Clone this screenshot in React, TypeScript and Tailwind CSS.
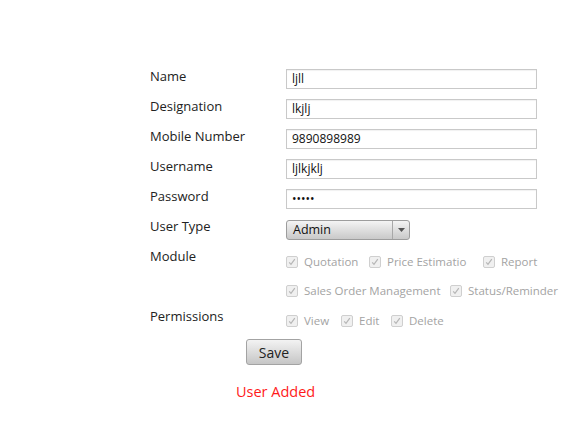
import type { ReactNode } from 'react'

const font = { fontFamily: '"Open Sans", "Segoe UI", "Liberation Sans", sans-serif' }

function Check({ label }: { label: string }) {
  return (
    <span className="flex items-center gap-[6px] text-[11.5px] text-[#a3a3a3]">
      <span className="flex h-[12px] w-[12px] items-center justify-center rounded-[2px] border border-[#cfcfcf] bg-[#f0f0f0]">
        <svg width="8" height="8" viewBox="0 0 8 8" fill="none">
          <path d="M1.2 4.3 L3 6.3 L6.8 1.2" stroke="#b5b5b5" strokeWidth="1.2" />
        </svg>
      </span>
      {label}
    </span>
  )
}

function Row({ label, children }: { label: string; children: ReactNode }) {
  return (
    <div className="flex h-[30px] items-center">
      <div className="w-[136px] -translate-y-[2px] text-[13px] text-[#222]">{label}</div>
      {children}
    </div>
  )
}

function TextBox({ value }: { value: string }) {
  return (
    <div className="flex h-[20px] w-[251px] items-center border border-[#c9c9c9] bg-white px-[5px] text-[12px] text-[#111] shadow-[inset_0_1px_1px_rgba(0,0,0,0.06)]">
      {value}
    </div>
  )
}

export default function App() {
  return (
    <div className="min-h-[439px] bg-white pl-[150px] pt-[64px]" style={font}>
      <Row label="Name"><TextBox value="ljll" /></Row>
      <Row label="Designation"><TextBox value="lkjlj" /></Row>
      <Row label="Mobile Number"><TextBox value="9890898989" /></Row>
      <Row label="Username"><TextBox value="ljlkjklj" /></Row>
      <Row label="Password"><TextBox value="•••••" /></Row>
      <Row label="User Type">
        <div className="flex h-[20px] w-[124px] translate-y-[1px] items-stretch overflow-hidden rounded-[3px] border border-[#9d9d9d] bg-gradient-to-b from-[#f4f4f4] to-[#c9c9c9] text-[12.5px] text-[#111]">
          <span className="flex flex-1 items-center px-[6px]">Admin</span>
          <span className="flex w-[17px] items-center justify-center border-l border-[#a8a8a8]">
            <svg width="7" height="4" viewBox="0 0 7 4">
              <path d="M0 0 H7 L3.5 4 Z" fill="#555" />
            </svg>
          </span>
        </div>
      </Row>
      <Row label="Module">
        <div className="flex translate-y-[3px] items-center">
          <span className="w-[83px]"><Check label="Quotation" /></span>
          <span className="w-[114px]"><Check label="Price Estimatio" /></span>
          <Check label="Report" />
        </div>
      </Row>
      <div className="flex h-[30px] translate-y-[2px] items-center pl-[136px]">
        <span className="w-[164px]"><Check label="Sales Order Management" /></span>
        <Check label="Status/Reminder" />
      </div>
      <Row label="Permissions">
        <div className="flex translate-y-[2px] items-center">
          <span className="w-[55px]"><Check label="View" /></span>
          <span className="w-[50px]"><Check label="Edit" /></span>
          <Check label="Delete" />
        </div>
      </Row>
      <div className="mt-[5px] pl-[96px]">
        <button className="h-[26px] w-[56px] rounded-[3px] border border-[#a3a3a3] bg-gradient-to-b from-[#f3f3f3] to-[#c6c6c6] text-[14px] text-[#222]">
          Save
        </button>
      </div>
      <div className="mt-[16px] pl-[86px] text-[14.5px] text-[#ff1a1a]">User Added</div>
    </div>
  )
}
